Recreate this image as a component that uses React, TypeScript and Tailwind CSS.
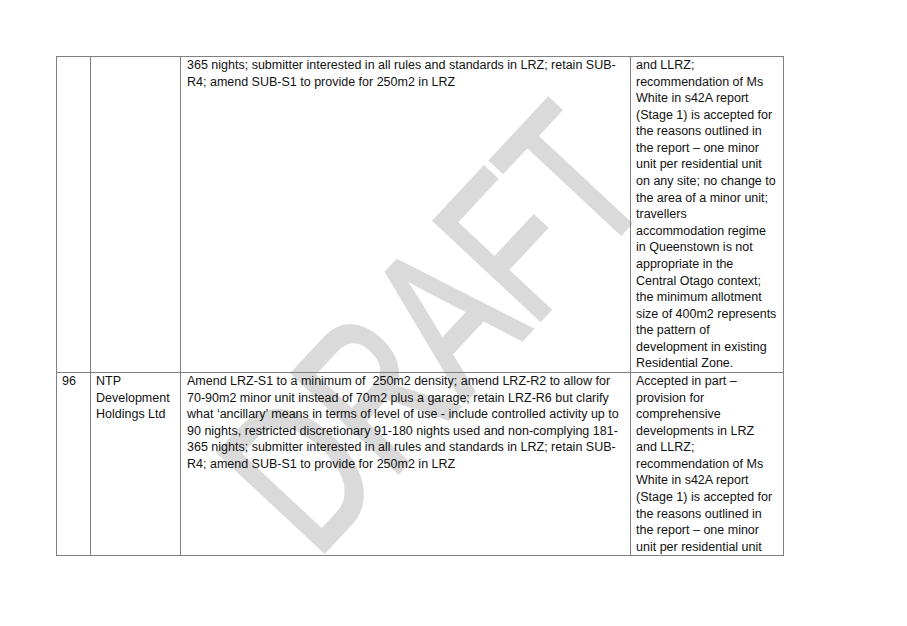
type Row = {
  no: string
  submitter: string[]
  request: string[]
  decision: string[]
}

const rows: Row[] = [
  {
    no: "",
    submitter: [],
    request: [
      "365 nights; submitter interested in all rules and standards in LRZ; retain SUB-",
      "R4; amend SUB-S1 to provide for 250m2 in LRZ",
    ],
    decision: [
      "and LLRZ;",
      "recommendation of Ms",
      "White in s42A report",
      "(Stage 1) is accepted for",
      "the reasons outlined in",
      "the report – one minor",
      "unit per residential unit",
      "on any site; no change to",
      "the area of a minor unit;",
      "travellers",
      "accommodation regime",
      "in Queenstown is not",
      "appropriate in the",
      "Central Otago context;",
      "the minimum allotment",
      "size of 400m2 represents",
      "the pattern of",
      "development in existing",
      "Residential Zone.",
    ],
  },
  {
    no: "96",
    submitter: ["NTP", "Development", "Holdings Ltd"],
    request: [
      "Amend LRZ-S1 to a minimum of \u00a0250m2 density; amend LRZ-R2 to allow for",
      "70-90m2 minor unit instead of 70m2 plus a garage; retain LRZ-R6 but clarify",
      "what ‘ancillary’ means in terms of level of use - include controlled activity up to",
      "90 nights, restricted discretionary 91-180 nights used and non-complying 181-",
      "365 nights; submitter interested in all rules and standards in LRZ; retain SUB-",
      "R4; amend SUB-S1 to provide for 250m2 in LRZ",
    ],
    decision: [
      "Accepted in part –",
      "provision for",
      "comprehensive",
      "developments in LRZ",
      "and LLRZ;",
      "recommendation of Ms",
      "White in s42A report",
      "(Stage 1) is accepted for",
      "the reasons outlined in",
      "the report – one minor",
      "unit per residential unit",
    ],
  },
]

function Lines({ lines }: { lines: string[] }) {
  return (
    <>
      {lines.map((line, i) => (
        <div key={i} className="whitespace-nowrap">
          {line}
        </div>
      ))}
    </>
  )
}

export default function App() {
  return (
    <div className="relative w-[907px] h-[626px] overflow-hidden bg-white font-['Liberation_Sans',Arial,sans-serif] text-[#111]">
      {/* watermark sits behind the table */}
      <div className="absolute left-[433px] top-[328px] text-[150px] leading-none text-[#dadada] whitespace-nowrap select-none [-webkit-text-stroke:3px_#dadada] [transform:translate(-50%,-50%)_rotate(-47deg)_scaleY(1.4)]">
        DRAFT
      </div>

      <div className="relative ml-[56px] pt-[56px]">
        <div className="grid grid-cols-[34px_90px_450px_153px] w-[728px] border-l border-t border-[#808080] text-[12.5px] leading-[16.58px]">
          {rows.map((row, idx) => (
            <div key={idx} className="contents">
              <div className="border-r border-b border-[#808080] px-[5px]">{row.no}</div>
              <div className="border-r border-b border-[#808080] px-[5px]">
                <Lines lines={row.submitter} />
              </div>
              <div className="border-r border-b border-[#808080] px-[6px]">
                <Lines lines={row.request} />
              </div>
              <div className="border-r border-b border-[#808080] px-[5px]">
                <Lines lines={row.decision} />
              </div>
            </div>
          ))}
        </div>
      </div>
    </div>
  )
}
